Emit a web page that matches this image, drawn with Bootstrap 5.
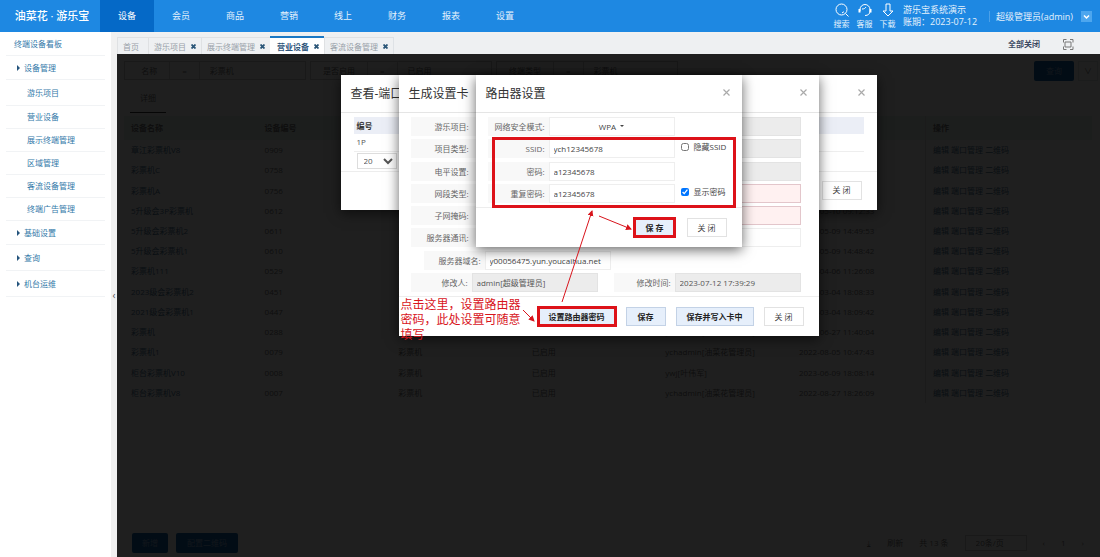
<!DOCTYPE html>
<html lang="zh-CN">
<head>
<meta charset="utf-8">
<meta name="viewport" content="width=device-width, initial-scale=1">
<title>油菜花 · 游乐宝</title>
<link href="https://cdn.jsdelivr.net/npm/bootstrap@5.3.0/dist/css/bootstrap.min.css" rel="stylesheet">
<style>
body{font:8px/12px "Open Sans","Noto Sans CJK SC",sans-serif;color:#555;background:#f1f1f1}
a{text-decoration:none}
button,input,select{font:inherit;color:inherit}
.h-top{min-height:32px;background:#1e88e2;color:#e4f1fc;font-size:9px}
.h-top a,.h-top button{color:inherit}
.brand{width:104px;margin-right:-4px;font-size:11px;font-weight:500;color:#fff}
.menu a{width:54px;height:32px;line-height:31px;text-align:center}
.menu a.on{background:#0569c7;color:#fff}
.tool{width:23px;text-align:center;line-height:12px;font-size:8px}
.tool svg{display:block;margin:0 auto 1px}
.who{border-left:1px solid #4ba0e8;padding-left:6px;line-height:11px}
.drop{width:11px;height:11px;background:#4da6ee;border:0}
.side{width:111px;background:#fff;padding:1px 6px 0}
.side a{display:flex;align-items:center;color:#3379a9;border-bottom:1px solid #f1f3f5;height:23px}
.side a.sub{padding-left:21px}
.side a.grp,.side a.tall{height:26px}
.side a.grp{padding-left:11px}
.side a.grp:before{content:"";border:3px solid transparent;border-left-color:#24547d;border-right:0;margin-right:4px}
.side a.lead-item{padding-left:8px}
.side a.short{height:24px}
.fold{width:6px;background:#f1f1f1;color:#555;border:0;font-size:10px}
.tabs{height:20px;background:#eef0f2;margin-top:2px}
.tabs .tab{height:17px;display:flex;align-items:center;gap:5px;padding:1px 5px 0 5px;border:1px solid #dfe1e3;border-bottom:0;border-right:0;color:#98a0a8}
.tabs .tab a{color:inherit}
.tabs .tab.on{height:18px;padding-left:7px;border:0;border-top:2px solid #1c78c4;background:#fff;color:#2c5379;font-weight:700}
.tabs .tab button{border:0;background:none;padding:0;display:flex}
.pane{display:grid;background:#fff}
.pane>*{grid-area:1/1}
.veil{background:rgba(0,0,0,.88);z-index:1}
.sheet{min-width:0;padding:7px 8px 4px 7px;color:#757575}
.crit{height:19px;width:182px;border:1px solid #c9c9c9;display:flex}
.crit span{padding:3px 12px;border-right:1px solid #d5d5d5}
.crit input{border:0;background:none;width:70px;padding:0 10px}
.blue{background:#1260a8;color:#8ab0d8;border:0;border-radius:2px;height:20px;text-align:center}
.more{width:20px;margin-right:-6px}
.subtab{width:36px;height:21px;text-align:center;border-bottom:1px solid #333;margin:11px 0 0 6px}
.grid-t{table-layout:fixed;width:100%;height:287px;margin-top:3px;white-space:nowrap}
.grid-t th,.grid-t td{padding:0 7px}
.grid-t th{height:24px;width:13.8%;background:#e3f1ea}
.grid-t th:last-child{width:auto}
.grid-t td:first-child,.grid-t td:last-child,.grid-t td:last-child a{color:#4f7796}
.grid-t :is(th,td):last-child{border-left:1px solid #dadada}
.dlgs{display:grid;justify-items:center;align-items:start;padding-top:21px;z-index:2}
.dlg{grid-area:1/1;background:#fff;box-shadow:0 3px 12px rgba(0,0,0,.6);position:relative;max-width:100%}
.dlg header{height:38px;border-bottom:1px solid #e5e5e5;padding:0 10px;display:flex;justify-content:space-between}
.dlg h2{font-size:12px;line-height:38px;margin:0;color:#333;font-weight:400}
.dlg .x{border:0;background:none;height:34px;padding:0 2px;display:flex;align-items:center}
.ports{width:536px}.card-set{width:420px}.router{width:266px}
.ports table{width:100%}
.ports th{height:17px;background:#ebeef6;color:#333;padding:0 3px}
.ports td{height:17px;padding:0 3px;border-bottom:1px solid #eee}
.ports .body-p{padding:4px 13px 0}
.ports select{width:40px;height:16px;border:1px solid #ddd;background:#fff;margin:1px 3px 2px;padding:0 2px}
.foot{border-top:1px solid #ededed;display:flex;justify-content:flex-end;gap:10px;padding:10px 15px}
.ports .foot{padding-top:9px}
.router .foot{padding-bottom:10px;gap:12px}
.b{height:19px;min-width:40px;border:1px solid #e2e2e2;background:#fff;color:#444;padding:0 9px}
.b.pri{background:#e6effb;border-color:#c3d2e6;color:#222;font-weight:700;padding:0 10px}
.stack{display:flex;flex-direction:column;justify-content:space-between;padding:4px 12px}
.card-set .stack{height:183px}
.router .stack{height:94px}
.f{display:flex;height:19px}
.f label{background:#f8f8f8;width:65px;padding-right:7px;line-height:19px;text-align:right;color:#666}
.f .short-l{width:61px;padding-right:4px}
.f input[type=text],.f button{width:126px;border:1px solid #eee;background:#fff;padding:0 4px;color:#444;height:19px;border-radius:0}
.f input.wide{width:325px}
.f input[type=text].ro{background:#ececec;border-color:#e3e3e3;color:#555}
.f input[type=text].bad{background:#fff1f1;border-color:#e3c6cb}
.f.inset{padding-left:13px}
.f.pair{padding-right:6px}
.red{outline:3px solid #dd1219;outline-offset:-2px}
.marked{border:3px solid #dd1219;position:absolute;left:16px;top:62px;width:244px;height:71px;pointer-events:none}
.check{position:absolute;left:205px;display:flex;align-items:center;gap:5px;color:#444}
.check input{width:8px;height:8px;margin:0}
.c1{top:66px}.c2{top:111px}
.tip{position:absolute;left:2px;top:223px;width:124px;margin:0;font:12px/15px "Liberation Serif","Noto Sans CJK SC",serif;color:#d8141c}
.arrows{position:absolute;left:0;top:0;overflow:visible}
.over{grid-area:1/1;width:420px;height:261px;position:relative;z-index:3;pointer-events:none}
.page-sel{width:62px;height:16px;border:1px solid #ccc;background:none;padding:0 10px;appearance:none}
</style>
</head>
<body>
<div class="min-vh-100 d-flex flex-column">
<nav class="h-top d-flex align-items-center">
  <div class="brand text-center">油菜花 · 游乐宝</div>
  <div class="menu d-flex"><a class="on" href="#">设备</a><a href="#">会员</a><a href="#">商品</a><a href="#">营销</a><a href="#">线上</a><a href="#">财务</a><a href="#">报表</a><a href="#">设置</a></div>
  <div class="ms-auto d-flex align-items-center">
    <a class="tool" href="#"><svg width="14" height="14" viewBox="0 0 14 14" fill="none" stroke="#fff"><circle cx="6.500" cy="6.500" r="5.500"/><path d="M10.500 10.500l3 3M9 8.500a3.200 3.200 0 0 1-2 1.300"/></svg>搜索</a>
    <a class="tool" href="#"><svg width="14" height="14" viewBox="0 0 14 14" fill="none" stroke="#fff"><path d="M2 8V6.500a5 5 0 0 1 10 0V8M12 8c0 3-2 4.500-5 4.500"/><path d="M1.500 6v3.500M12.500 6v3.500" stroke-width="2"/><path d="M4 6c2 0 3-.5 4-2"/></svg>客服</a>
    <a class="tool" href="#"><svg width="14" height="14" viewBox="0 0 14 14" fill="none" stroke="#fff"><path d="M5 1h4v7h3l-5 5-5-5h3z"/></svg>下载</a>
    <div class="pe-2 ps-1 me-1">游乐宝系统演示<br>账期：2023-07-12</div>
    <div class="who">超级管理员(admin)</div>
    <button class="drop ms-2 me-2 p-0 d-flex" aria-label="账户菜单"><svg width="11" height="11" viewBox="0 0 11 11" fill="none" stroke="#fff" stroke-width="1.500"><path d="M3 4.500l2.500 2.500L8 4.500"/></svg></button>
  </div>
</nav>
<div class="d-flex flex-grow-1">
  <aside class="side flex-shrink-0">
    <a class="lead-item" href="#">终端设备看板</a>
    <a class="grp short" href="#">设备管理</a>
    <a class="sub tall" href="#">游乐项目</a>
    <a class="sub" href="#">营业设备</a><a class="sub" href="#">展示终端管理</a><a class="sub" href="#">区域管理</a><a class="sub" href="#">客流设备管理</a><a class="sub" href="#">终端广告管理</a>
    <a class="grp short" href="#">基础设置</a><a class="grp" href="#">查询</a><a class="grp" href="#">机台运维</a>
  </aside>
  <button class="fold p-0 flex-shrink-0" aria-label="收起">‹</button>
  <main class="flex-grow-1 d-flex flex-column" style="min-width:0">
    <div class="tabs d-flex align-items-end">
      <div class="tab"><a href="#" class="pe-1">首页</a></div>
      <div class="tab"><a href="#">游乐项目</a><button aria-label="关闭"><svg width="5" height="5" viewBox="0 0 5 5" stroke="#2b5678" stroke-width="1.800"><path d="M.5.5l4 4m0-4l-4 4"/></svg></button></div>
      <div class="tab"><a href="#">展示终端管理</a><button aria-label="关闭"><svg width="5" height="5" viewBox="0 0 5 5" stroke="#2b5678" stroke-width="1.800"><path d="M.5.5l4 4m0-4l-4 4"/></svg></button></div>
      <div class="tab on"><a href="#">营业设备</a><button aria-label="关闭"><svg width="5" height="5" viewBox="0 0 5 5" stroke="#2b5678" stroke-width="1.800"><path d="M.5.5l4 4m0-4l-4 4"/></svg></button></div>
      <div class="tab border-end"><a href="#">客流设备管理</a><button aria-label="关闭"><svg width="5" height="5" viewBox="0 0 5 5" stroke="#2b5678" stroke-width="1.800"><path d="M.5.5l4 4m0-4l-4 4"/></svg></button></div>
      <a class="ms-auto fw-bold pb-1" href="#" style="color:#3c4a62">全部关闭</a>
      <svg class="ms-3 me-4 mb-1" width="20" height="11" viewBox="-6 0 20 11" fill="none" stroke="#777"><path d="M1.500 3.500v-3h3M8 .5h3v3M11 7.500v3H8M4.500 10.500h-3v-3M3 3h6v5H3z"/></svg>
    </div>
    <div class="pane flex-grow-1">
      <div class="sheet d-flex flex-column">
        <div class="d-flex gap-1">
          <div class="crit"><span>&nbsp; 名称</span><span>=</span><input value="彩票机" aria-label="名称"></div>
          <div class="crit"><span>是否启用</span><span>=</span><input value="已启用" aria-label="是否启用"></div>
          <div class="crit"><span>终端类型</span><span>=</span><input value="彩票机" aria-label="终端类型"></div>
          <button class="blue ms-auto" style="width:40px">查询</button><button class="more border bg-transparent p-0">∨</button>
        </div>
        <div class="subtab">详细</div>
        <table class="grid-t">
          <thead><tr><th>设备名称</th><th>设备编号</th><th>机型</th><th>状态</th><th>修改人</th><th>修改时间</th><th>操作</th></tr></thead>
          <tbody id="rows"></tbody>
        </table>
        <div class="mt-auto d-flex align-items-center ps-2">
          <button class="blue me-2" style="width:36px">新增</button><button class="blue" style="width:62px">配置二维码</button>
          <div class="ms-auto me-2 d-flex align-items-center gap-3"><span>⤓</span><span>刷新</span><span>共 13 条</span><select class="page-sel" aria-label="每页条数"><option>20条/页</option></select><span>‹</span><span>1</span><span>›</span></div>
        </div>
      </div>
      <div class="veil"></div>
      <div class="dlgs">
        <section class="dlg ports">
          <header><h2>查看-端口</h2><button class="x" aria-label="关闭"><svg width="7" height="7" viewBox="0 0 7 7" stroke="#aaa" stroke-width="1.200"><path d="M.5.5l6 6m0-6l-6 6"/></svg></button></header>
          <div class="body-p"><table><thead><tr><th>编号</th></tr></thead><tbody><tr><td>1P</td></tr></tbody></table>
          <select aria-label="每页"><option>20</option></select></div>
          <div class="foot"><button class="b">关 闭</button></div>
        </section>
        <section class="dlg card-set">
          <header><h2>生成设置卡</h2><button class="x" aria-label="关闭"><svg width="7" height="7" viewBox="0 0 7 7" stroke="#aaa" stroke-width="1.200"><path d="M.5.5l6 6m0-6l-6 6"/></svg></button></header>
          <div class="stack">
            <div class="f"><label for="a1">游乐项目:</label><input class="wide ro" id="a1" type="text"></div>
            <div class="f"><label for="a2">项目类型:</label><input class="wide ro" id="a2" type="text"></div>
            <div class="f"><label for="a3">电平设置:</label><input class="wide ro" id="a3" type="text"></div>
            <div class="f"><label for="a4">网段类型:</label><input class="wide bad" id="a4" type="text"></div>
            <div class="f"><label for="a5">子网掩码:</label><input class="wide bad" id="a5" type="text"></div>
            <div class="f"><label for="a6">服务器通讯:</label><input class="wide" id="a6" type="text"></div>
            <div class="f inset"><label class="short-l" for="a7">服务器域名:</label><input id="a7" type="text" value="y00056475.yun.youcaihua.net"></div>
            <div class="f pair"><label class="short-l" for="a8">修改人:</label><input class="ro" id="a8" type="text" value="admin[超级管理员]"><label class="short-l ms-auto" for="a9">修改时间:</label><input class="ro" id="a9" type="text" value="2023-07-12 17:39:29"></div>
          </div>
          <div class="foot"><button class="b pri red">设置路由器密码</button><button class="b pri">保存</button><button class="b pri">保存并写入卡中</button><button class="b">关 闭</button></div>
        </section>
        <section class="dlg router">
          <header><h2>路由器设置</h2><button class="x" aria-label="关闭"><svg width="7" height="7" viewBox="0 0 7 7" stroke="#aaa" stroke-width="1.200"><path d="M.5.5l6 6m0-6l-6 6"/></svg></button></header>
          <div class="stack">
            <div class="f"><label class="short-l" for="r0">网络安全模式:</label><button id="r0" class="dropdown-toggle">WPA </button></div>
            <div class="f"><label class="short-l" for="r1">SSID:</label><input id="r1" type="text" value="ych12345678"></div>
            <div class="f"><label class="short-l" for="r2">密码:</label><input id="r2" type="text" value="a12345678"></div>
            <div class="f"><label class="short-l" for="r3">重复密码:</label><input id="r3" type="text" value="a12345678"></div>
          </div>
          <label class="check c1"><input type="checkbox">隐藏SSID</label>
          <label class="check c2"><input type="checkbox" checked>显示密码</label>
          <div class="marked"></div>
          <div class="foot"><button class="b pri red">保 存</button><button class="b">关 闭</button></div>
        </section>
        <div class="over">
          <p class="tip">点击这里，设置路由器密码，此处设置可随意填写</p>
          <svg class="arrows" width="420" height="261" stroke="#d8141c" fill="none"><defs><marker id="m" markerWidth="7" markerHeight="7" refX="5" refY="3" orient="auto" markerUnits="userSpaceOnUse"><path d="M0 0l6 3-6 3z" fill="#d8141c" stroke="none"/></marker></defs><path marker-end="url(#m)" d="M163 227L193 136"/><path marker-end="url(#m)" d="M200 141L232 154"/><path marker-end="url(#m)" d="M124 235L135 246"/></svg>
        </div>
      </div>
    </div>
  </main>
</div>
</div>
<script src="https://cdn.jsdelivr.net/npm/bootstrap@5.3.0/dist/js/bootstrap.bundle.min.js"></script>
<script>
const A='ychadmin[油菜花管理员]';
const data=[['章江彩票机V8','0909',A,'2023-07-10 10:20:11'],['彩票机C','0758',A,'2023-06-12 15:31:20'],['彩票机A','0756',A,'2023-06-12 15:30:02'],['5升级会3P彩票机','0612',A,'2023-05-10 09:12:33'],['5升级会彩票机2','0611',A,'2023-05-09 14:49:53'],['5升级会彩票机1','0610',A,'2023-05-09 14:48:42'],['彩票机111','0529',A,'2023-04-06 11:26:08'],['2023级会彩票机2','0451',A,'2023-03-04 18:08:33'],['2021级会彩票机1','0447',A,'2023-03-04 18:09:42'],['彩票机','0288',A,'2022-06-27 11:40:04'],['彩票机1','0079',A,'2022-08-05 10:47:43'],['柜台彩票机V10','0008','ywj[叶伟军]','2023-06-09 18:08:14'],['柜台彩票机V8','0007',A,'2022-08-27 18:26:09']];
document.getElementById('rows').innerHTML=data.map(r=>`<tr><td>${r[0]}</td><td>${r[1]}</td><td>彩票机</td><td>已启用</td><td>${r[2]}</td><td>${r[3]}</td><td><a href="#">编辑</a> <a href="#">端口管理</a> <a href="#">二维码</a></td></tr>`).join('');
</script>
</body>
</html>
